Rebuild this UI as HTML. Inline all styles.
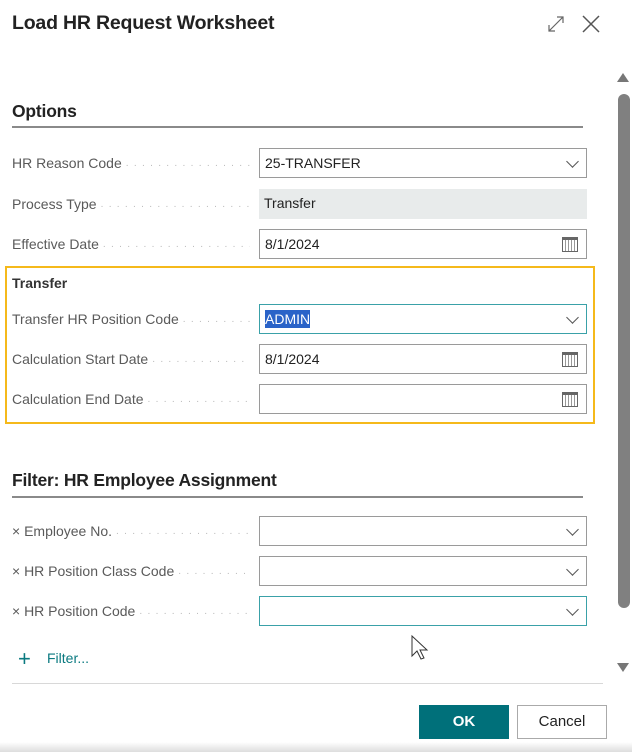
<!DOCTYPE html>
<html><head><meta charset="utf-8"><style>
*{box-sizing:border-box;margin:0;padding:0}
body{width:632px;height:752px;background:#fff;font-family:"Liberation Sans",sans-serif;color:#212121;position:relative;overflow:hidden}
.a{position:absolute}
.title{left:12px;top:12px;font-size:19.5px;color:#222;font-weight:bold;letter-spacing:-0.2px}
.h{left:12px;font-size:17.5px;color:#222;font-weight:bold;letter-spacing:-0.2px}
.ul{left:12px;width:571px;height:2px;background:#8a8a8a}
.lbl{left:12px;font-size:14px;color:#5a5a5a;width:238px;white-space:nowrap;overflow:hidden}
.lbl::after{content:" · · · · · · · · · · · · · · · · · · · · · · · ·";color:#bbb;font-size:10px;letter-spacing:1px}
.in{left:259px;width:328px;height:30px;border:1px solid #9a9a9a;font-size:14px;line-height:28px;padding-left:5px;color:#222}
.chev{position:absolute;right:9px;top:8px;width:9px;height:9px;border-right:1px solid #555;border-bottom:1px solid #555;transform:rotate(45deg)}
.cal{position:absolute;right:8px;top:7px;width:16px;height:15px;border:1px solid #666;border-top:3px solid #666;background:repeating-linear-gradient(90deg,#fff 0 2px,#999 2px 3px)}
</style></head><body>
<div class="a title">Load HR Request Worksheet</div>
<svg class="a" style="left:546px;top:14px" width="20" height="20"><path d="M3 17L17 3M11 3h6v6M3 11v6h6" stroke="#666" fill="none" stroke-width="1.2"/></svg>
<svg class="a" style="left:581px;top:14px" width="20" height="20"><path d="M2 2L18 18M18 2L2 18" stroke="#555" fill="none" stroke-width="1.5"/></svg>

<div class="a h" style="top:101px">Options</div>
<div class="a ul" style="top:126px"></div>

<div class="a lbl" style="top:155px">HR Reason Code</div>
<div class="a in" style="top:148px">25-TRANSFER<span class="chev"></span></div>
<div class="a lbl" style="top:196px">Process Type</div>
<div class="a in" style="top:189px;border:none;background:#e8ebeb">Transfer</div>
<div class="a lbl" style="top:236px">Effective Date</div>
<div class="a in" style="top:229px">8/1/2024<span class="cal"></span></div>

<div class="a" style="left:5px;top:266px;width:590px;height:158px;border:2px solid #f5b91b"></div>
<div class="a" style="left:12px;top:275px;font-size:14px;font-weight:bold;color:#333">Transfer</div>
<div class="a lbl" style="top:311px">Transfer HR Position Code</div>
<div class="a in" style="top:304px;border-color:#3aa1a8"><span style="background:#2a63c8;color:#fff;padding:1px 0">ADMIN</span><span class="chev"></span></div>
<div class="a lbl" style="top:351px">Calculation Start Date</div>
<div class="a in" style="top:344px">8/1/2024<span class="cal"></span></div>
<div class="a lbl" style="top:391px">Calculation End Date</div>
<div class="a in" style="top:384px"><span class="cal"></span></div>

<div class="a h" style="top:470px">Filter: HR Employee Assignment</div>
<div class="a ul" style="top:496px"></div>
<div class="a lbl" style="top:523px">× Employee No.</div>
<div class="a in" style="top:516px"><span class="chev"></span></div>
<div class="a lbl" style="top:563px">× HR Position Class Code</div>
<div class="a in" style="top:556px"><span class="chev"></span></div>
<div class="a lbl" style="top:603px">× HR Position Code</div>
<div class="a in" style="top:596px;border-color:#3aa1a8"><span class="chev"></span></div>
<div class="a" style="left:18px;top:646px;font-size:22px;color:#0b7a80;font-weight:300">+</div>
<div class="a" style="left:47px;top:650px;font-size:14px;color:#0b7a80">Filter...</div>
<svg class="a" style="left:410px;top:634px" width="20" height="28"><path d="M2 2v20l5-5 4 8 3-1-4-8h7z" fill="#fff" stroke="#333" stroke-width="1"/></svg>

<div class="a" style="left:12px;top:683px;width:591px;height:1px;background:#d8d8d8"></div>

<div class="a" style="left:617px;top:73px;width:0;height:0;border-left:6px solid transparent;border-right:6px solid transparent;border-bottom:9px solid #777"></div>
<div class="a" style="left:618px;top:94px;width:12px;height:514px;background:#808080;border-radius:6px"></div>
<div class="a" style="left:617px;top:663px;width:0;height:0;border-left:6px solid transparent;border-right:6px solid transparent;border-top:9px solid #777"></div>

<div class="a" style="left:419px;top:705px;width:90px;height:34px;background:#00707a;color:#fff;font-weight:bold;font-size:15px;text-align:center;line-height:34px">OK</div>
<div class="a" style="left:517px;top:705px;width:90px;height:34px;border:1px solid #aaa;background:#fff;font-size:15px;text-align:center;line-height:32px;color:#222">Cancel</div>
<div class="a" style="left:0;top:742px;width:632px;height:10px;background:linear-gradient(#fff,#ddd)"></div>
</body></html>
